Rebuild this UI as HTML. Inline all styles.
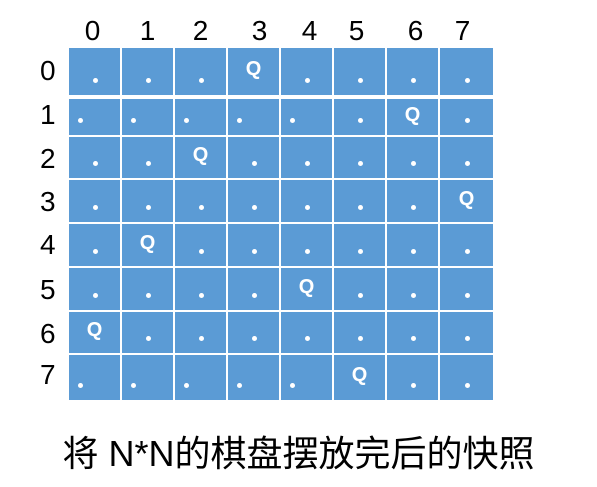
<!DOCTYPE html>
<html><head><meta charset="utf-8"><style>
body{margin:0;width:597px;height:487px;background:#fff;position:relative;overflow:hidden;font-family:"Liberation Sans","Noto Sans CJK SC",sans-serif}
.c{position:absolute;background:#5b9bd5}
.r0{top:48px;height:47px}.r1{top:99px;height:36px}.r2{top:137px;height:41px}.r3{top:180px;height:42px}
.r4{top:224px;height:42px}.r5{top:268px;height:42px}.r6{top:312px;height:41px}.r7{top:355px;height:45px}
.k0{left:69px;width:51px}.k1{left:122px;width:51px}.k2{left:175px;width:51px}.k3{left:228px;width:51px}
.k4{left:281px;width:51px}.k5{left:334px;width:51px}.k6{left:387px;width:51px}.k7{left:440px;width:53px}
.d::after,.l::after{content:"";position:absolute;bottom:12px;width:5px;height:5px;border-radius:50%;background:#fff}
.d::after{left:calc(50% - 2px)}
.l::after{left:9px}
.q{color:#fff;font-weight:bold;font-size:20px;display:flex;align-items:center;justify-content:center}
.q span{margin-top:-4px}
.h{position:absolute;font-size:28px;color:#000;width:53px;text-align:center;top:15px}
.v{position:absolute;font-size:28px;color:#000;left:40px}
.cap{position:absolute;top:425px;left:0;width:597px;text-align:center;font-size:36px;color:#000}
</style></head><body>
<div class="h" style="left:66px">0</div><div class="h" style="left:121px">1</div><div class="h" style="left:174px">2</div><div class="h" style="left:233px">3</div><div class="h" style="left:283px">4</div><div class="h" style="left:330px">5</div><div class="h" style="left:389px">6</div><div class="h" style="left:436px">7</div>
<div class="v" style="top:55px">0</div><div class="v" style="top:99px">1</div><div class="v" style="top:143px">2</div><div class="v" style="top:186px">3</div><div class="v" style="top:229px">4</div><div class="v" style="top:274px">5</div><div class="v" style="top:318px">6</div><div class="v" style="top:359px">7</div>

<div class="c r0 k0 d"></div><div class="c r0 k1 d"></div><div class="c r0 k2 d"></div><div class="c r0 k3 q"><span>Q</span></div><div class="c r0 k4 d"></div><div class="c r0 k5 d"></div><div class="c r0 k6 d"></div><div class="c r0 k7 d"></div>
<div class="c r1 k0 l"></div><div class="c r1 k1 l"></div><div class="c r1 k2 l"></div><div class="c r1 k3 l"></div><div class="c r1 k4 l"></div><div class="c r1 k5 d"></div><div class="c r1 k6 q"><span>Q</span></div><div class="c r1 k7 d"></div>
<div class="c r2 k0 d"></div><div class="c r2 k1 d"></div><div class="c r2 k2 q"><span>Q</span></div><div class="c r2 k3 d"></div><div class="c r2 k4 d"></div><div class="c r2 k5 d"></div><div class="c r2 k6 d"></div><div class="c r2 k7 d"></div>
<div class="c r3 k0 d"></div><div class="c r3 k1 d"></div><div class="c r3 k2 d"></div><div class="c r3 k3 d"></div><div class="c r3 k4 d"></div><div class="c r3 k5 d"></div><div class="c r3 k6 d"></div><div class="c r3 k7 q"><span>Q</span></div>
<div class="c r4 k0 d"></div><div class="c r4 k1 q"><span>Q</span></div><div class="c r4 k2 d"></div><div class="c r4 k3 d"></div><div class="c r4 k4 d"></div><div class="c r4 k5 d"></div><div class="c r4 k6 d"></div><div class="c r4 k7 d"></div>
<div class="c r5 k0 d"></div><div class="c r5 k1 d"></div><div class="c r5 k2 d"></div><div class="c r5 k3 d"></div><div class="c r5 k4 q"><span>Q</span></div><div class="c r5 k5 d"></div><div class="c r5 k6 d"></div><div class="c r5 k7 d"></div>
<div class="c r6 k0 q"><span>Q</span></div><div class="c r6 k1 d"></div><div class="c r6 k2 d"></div><div class="c r6 k3 d"></div><div class="c r6 k4 d"></div><div class="c r6 k5 d"></div><div class="c r6 k6 d"></div><div class="c r6 k7 d"></div>
<div class="c r7 k0 l"></div><div class="c r7 k1 l"></div><div class="c r7 k2 l"></div><div class="c r7 k3 l"></div><div class="c r7 k4 l"></div><div class="c r7 k5 q"><span>Q</span></div><div class="c r7 k6 d"></div><div class="c r7 k7 d"></div>

<div class="cap">将 N*N的棋盘摆放完后的快照</div>
</body></html>
